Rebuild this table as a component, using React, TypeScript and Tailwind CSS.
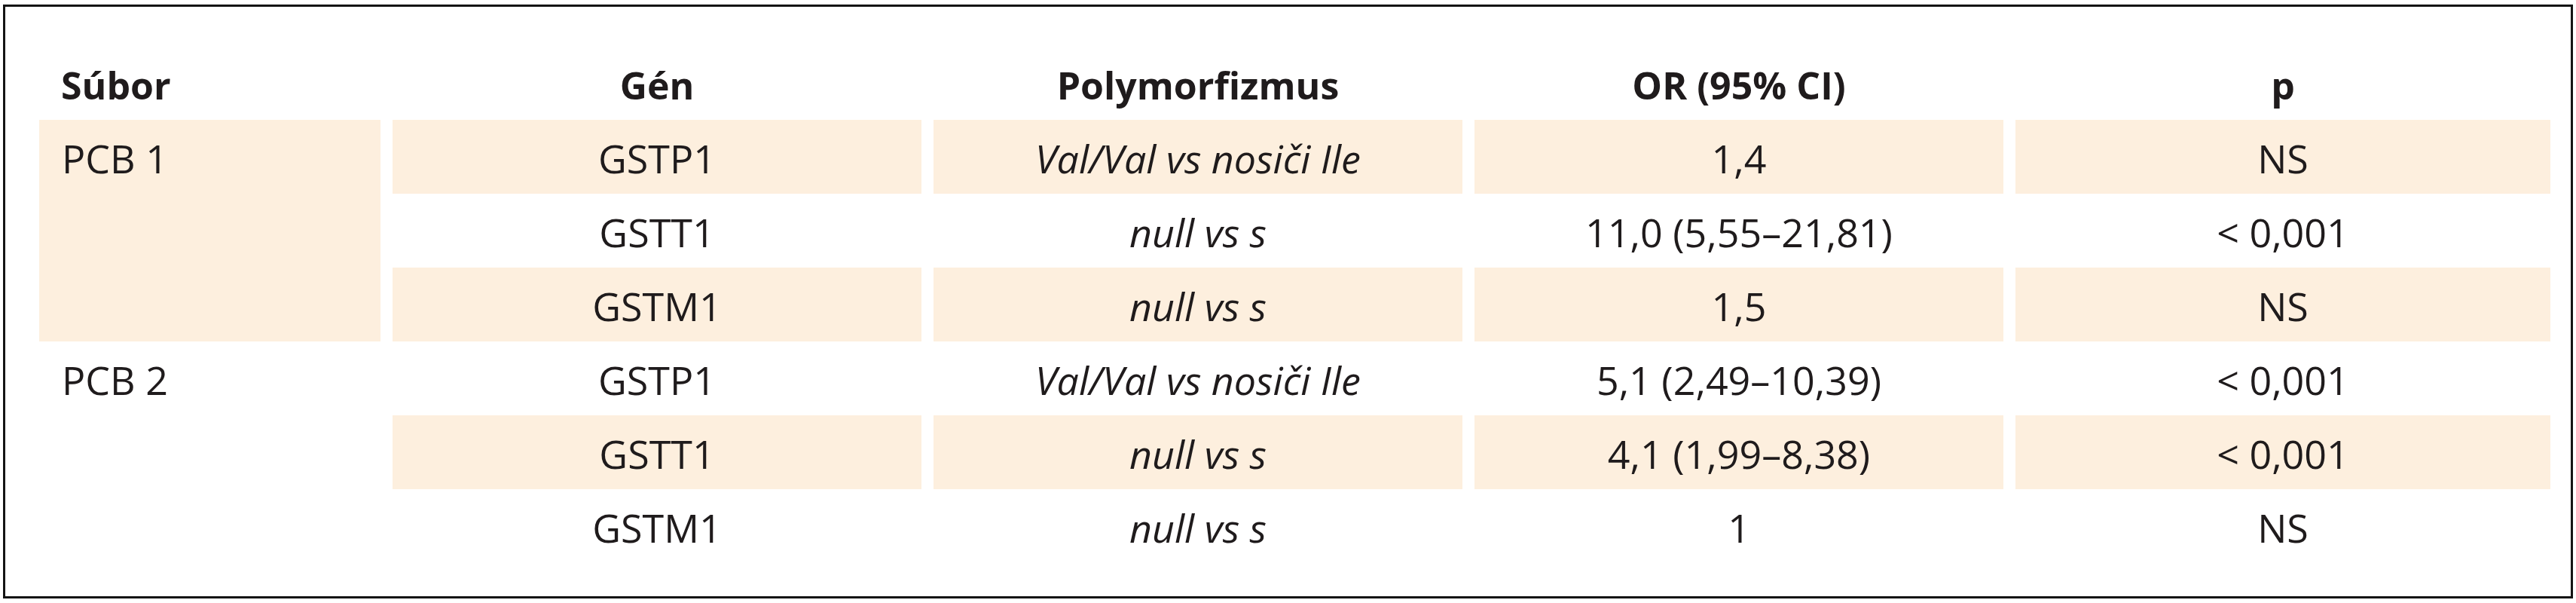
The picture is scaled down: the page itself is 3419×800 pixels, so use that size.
import React from "react";

type Row = { gene: string; poly: string; or: string; p: string };

const groups: { name: string; shaded: boolean; rows: Row[] }[] = [
  {
    name: "PCB 1",
    shaded: true,
    rows: [
      { gene: "GSTP1", poly: "Val/Val vs nosiči Ile", or: "1,4", p: "NS" },
      { gene: "GSTT1", poly: "null vs s", or: "11,0 (5,55–21,81)", p: "< 0,001" },
      { gene: "GSTM1", poly: "null vs s", or: "1,5", p: "NS" },
    ],
  },
  {
    name: "PCB 2",
    shaded: false,
    rows: [
      { gene: "GSTP1", poly: "Val/Val vs nosiči Ile", or: "5,1 (2,49–10,39)", p: "< 0,001" },
      { gene: "GSTT1", poly: "null vs s", or: "4,1 (1,99–8,38)", p: "< 0,001" },
      { gene: "GSTM1", poly: "null vs s", or: "1", p: "NS" },
    ],
  },
];

export default function App() {
  return (
    <div className="w-[3419px] h-[800px] bg-white pt-[6px] pl-[4px]" style={{ fontFamily: '"Open Sans", "Noto Sans", sans-serif' }}>
      <div className="w-[3411px] h-[788px] border-[3px] border-[#141414] pl-[45px] text-[#1f1b1c]">
        <div className="grid grid-cols-[453px_702px_702px_702px_710px] gap-x-4">
          {/* header */}
          <div className="h-[150px] flex items-end pb-[16px] pl-[29px] text-[50px] leading-[60px] font-bold">Súbor</div>
          <div className="h-[150px] flex items-end justify-center pb-[16px] text-[50px] leading-[60px] font-bold">Gén</div>
          <div className="h-[150px] flex items-end justify-center pb-[16px] text-[50px] leading-[60px] font-bold">Polymorfizmus</div>
          <div className="h-[150px] flex items-end justify-center pb-[16px] text-[50px] leading-[60px] font-bold">OR (95% CI)</div>
          <div className="h-[150px] flex items-end justify-center pb-[16px] text-[50px] leading-[60px] font-bold">p</div>

          {groups.map((g, gi) => (
            <React.Fragment key={g.name}>
              <div
                className={`${gi === 0 ? "row-start-2 row-end-5" : "row-start-5 row-end-8"} col-start-1 ${g.shaded ? "bg-[#fdefde]" : ""}`}
              >
                <div className="h-[98px] flex items-center pl-[30px] pt-[3px] text-[52px] leading-[60px]">{g.name}</div>
              </div>
              {g.rows.map((r, ri) => {
                const idx = gi * 3 + ri;
                const bg = idx % 2 === 0 ? "bg-[#fdefde]" : "";
                const cell = `h-[98px] flex items-center justify-center pt-[3px] text-[52px] leading-[60px] ${bg}`;
                return (
                  <React.Fragment key={idx}>
                    <div className={`${cell} col-start-2`}>{r.gene}</div>
                    <div className={`${cell} italic`}>{r.poly}</div>
                    <div className={cell}>{r.or}</div>
                    <div className={cell}>{r.p}</div>
                  </React.Fragment>
                );
              })}
            </React.Fragment>
          ))}
        </div>
      </div>
    </div>
  );
}
